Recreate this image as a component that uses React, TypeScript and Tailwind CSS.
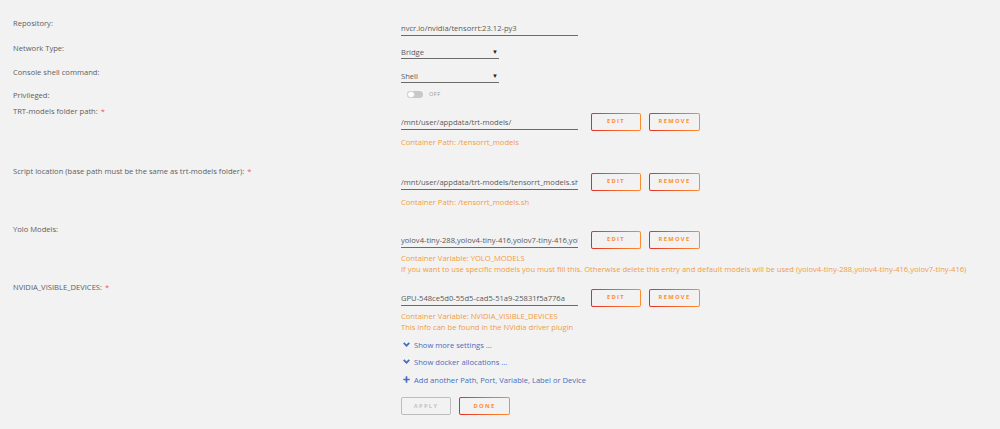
import React from "react";

const LABEL = "w-[401px] shrink-0 pl-[13px] text-[7.6px] leading-[12px] text-[#5e5e5e]";

function Label({ text, required }: { text: string; required?: boolean }) {
  return (
    <div className={LABEL}>
      {text}
      {required && <span className="ml-[3px] text-[#f0565b]">*</span>}
    </div>
  );
}

function GradButton({ children, wide }: { children: React.ReactNode; wide?: boolean }) {
  return (
    <div className="rounded-[2px] bg-linear-to-r from-[#e22828] to-[#ff8c2f] p-[1px]">
      <div
        className={`flex h-[16px] ${wide ? "w-[49px]" : "w-[48px]"} items-center justify-center rounded-[1px] bg-[#f2f2f2] text-[5.8px] font-bold tracking-[1.3px] text-[#ff8c2f]`}
      >
        {children}
      </div>
    </div>
  );
}

function TextField({ value, width }: { value: string; width: string }) {
  return (
    <input
      readOnly
      value={value}
      className={`${width} block h-[13.5px] bg-transparent p-0 font-['Open_Sans',sans-serif] text-[7.6px] leading-[12px] text-[#5a5a5a] outline-none border-0 border-b-[1.5px] border-solid border-[#6b6b6b]`}
    />
  );
}

function SelectField({ value }: { value: string }) {
  return (
    <div className="flex w-[98px] items-center justify-between border-b-[1.5px] border-[#6b6b6b] text-[7.6px] leading-[12px] text-[#5a5a5a]">
      <span>{value}</span>
      <span className="mr-[1px] text-[6px] text-[#222]">▼</span>
    </div>
  );
}

function PathRow({
  label,
  required,
  value,
  notes,
  mt,
  noteGap,
}: {
  label: string;
  required?: boolean;
  value: string;
  notes: string[];
  mt: string;
  noteGap: string;
}) {
  return (
    <div className={`flex ${mt}`}>
      <Label text={label} required={required} />
      <div className="pt-[8px]">
        <div className="flex items-end">
          <div className="mb-[1px]">
            <TextField value={value} width="w-[177px]" />
          </div>
          <div className="ml-[13px] flex gap-[8px]">
            <GradButton>EDIT</GradButton>
            <GradButton wide>REMOVE</GradButton>
          </div>
        </div>
        <div className={`${noteGap} text-[7.6px] leading-[11px] text-[#f29c3f]`}>
          {notes.map((n) => (
            <div key={n}>{n}</div>
          ))}
        </div>
      </div>
    </div>
  );
}

function Chevron() {
  return (
    <svg width="7" height="5" viewBox="0 0 10 7" className="mr-[4px]">
      <path d="M1 1.2 L5 5.2 L9 1.2" fill="none" stroke="#486dba" strokeWidth="2.4" />
    </svg>
  );
}

function Plus() {
  return (
    <svg width="7" height="7" viewBox="0 0 10 10" className="mr-[4px]">
      <path d="M5 0.5 V9.5 M0.5 5 H9.5" fill="none" stroke="#486dba" strokeWidth="2.4" />
    </svg>
  );
}

export default function App() {
  return (
    <div className="h-[429px] w-full overflow-hidden bg-[#f2f2f2] pt-[17px] font-['Open_Sans',sans-serif]">
      {/* Repository */}
      <div className="flex">
        <Label text="Repository:" />
        <div className="pt-[5px]">
          <TextField value="nvcr.io/nvidia/tensorrt:23.12-py3" width="w-[177px]" />
        </div>
      </div>

      {/* Network type */}
      <div className="mt-[6px] flex">
        <Label text="Network Type:" />
        <div className="pt-[4px]">
          <SelectField value="Bridge" />
        </div>
      </div>

      {/* Console shell */}
      <div className="mt-[7px] flex">
        <Label text="Console shell command:" />
        <div className="pt-[4px]">
          <SelectField value="Shell" />
        </div>
      </div>

      {/* Privileged toggle */}
      <div className="mt-[6px] flex">
        <Label text="Privileged:" />
        <div className="flex h-[12px] items-center pl-[6px]">
          <div className="relative h-[7px] w-[16px] rounded-[4px] bg-[#c8c8c8]">
            <div className="absolute left-0 top-0 h-[7px] w-[8px] rounded-[4px] border border-[#d0d0d0] bg-white" />
          </div>
          <span className="ml-[6px] text-[5.6px] tracking-[0.5px] text-[#999]">OFF</span>
        </div>
      </div>

      <PathRow
        mt="mt-[4px]"
        noteGap="mt-[6px]"
        label="TRT-models folder path:"
        required
        value="/mnt/user/appdata/trt-models/"
        notes={["Container Path: /tensorrt_models"]}
      />
      <PathRow
        mt="mt-[17px]"
        noteGap="mt-[6px]"
        label="Script location (base path must be the same as trt-models folder):"
        required
        value="/mnt/user/appdata/trt-models/tensorrt_models.sh"
        notes={["Container Path: /tensorrt_models.sh"]}
      />
      <PathRow
        mt="mt-[15px]"
        noteGap="mt-[4px]"
        label="Yolo Models:"
        value="yolov4-tiny-288,yolov4-tiny-416,yolov7-tiny-416,yolov7-tiny-640"
        notes={[
          "Container Variable: YOLO_MODELS",
          "If you want to use specific models you must fill this. Otherwise delete this entry and default models will be used (yolov4-tiny-288,yolov4-tiny-416,yolov7-tiny-416)",
        ]}
      />
      <PathRow
        mt="mt-[6px]"
        noteGap="mt-[4px]"
        label="NVIDIA_VISIBLE_DEVICES:"
        required
        value="GPU-548ce5d0-55d5-cad5-51a9-25831f5a776a"
        notes={["Container Variable: NVIDIA_VISIBLE_DEVICES", "This info can be found in the NVidia driver plugin"]}
      />

      {/* Links and actions */}
      <div className="ml-[401px] text-[7.6px] leading-[12px] text-[#486dba]">
        <div className="mt-[6px] flex items-center pl-[2px]">
          <Chevron />
          <span>Show more settings ...</span>
        </div>
        <div className="mt-[5px] flex items-center pl-[2px]">
          <Chevron />
          <span>Show docker allocations ...</span>
        </div>
        <div className="mt-[6px] flex items-center pl-[2px]">
          <Plus />
          <span>Add another Path, Port, Variable, Label or Device</span>
        </div>
        <div className="mt-[11px] flex gap-[8px]">
          <div className="flex h-[18px] w-[50px] items-center justify-center rounded-[2px] border border-[#bdbdbd] text-[5.8px] font-bold tracking-[1.3px] text-[#c4c4c4]">
            APPLY
          </div>
          <GradButton wide>DONE</GradButton>
        </div>
      </div>
    </div>
  );
}
